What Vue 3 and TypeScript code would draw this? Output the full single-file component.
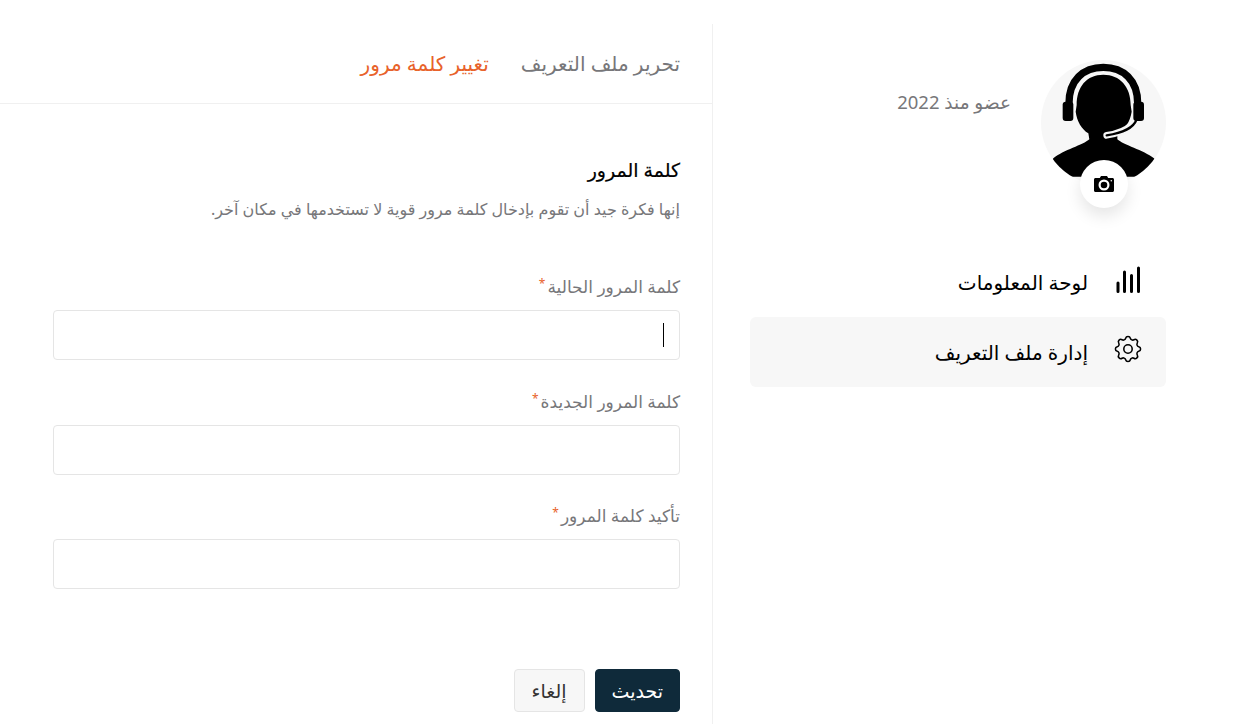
<script setup lang="ts">
const tabs = [
  { label: 'تحرير ملف التعريف', active: false },
  { label: 'تغيير كلمة مرور', active: true },
]
const fields = [
  { label: 'كلمة المرور الحالية', focused: true },
  { label: 'كلمة المرور الجديدة', focused: false },
  { label: 'تأكيد كلمة المرور', focused: false },
]
</script>

<template>
  <div class="page" dir="rtl">
    <aside class="sidebar">
      <div class="profile">
        <div class="avatar">
          <svg class="person" viewBox="63 30 375 375">
            <path d="M250 74C200 74 170 110 170 165L167 185C171 215 185 237 205 250L208 268C190 285 130 300 100 325L60 380H440L402 325C370 300 310 285 292 268L292 255C315 240 330 215 335 185L332 165C332 110 300 74 250 74Z" fill="#000" />
            <path d="M147 160C147 90 190 52 250 52C310 52 353 90 353 160" fill="none" stroke="#000" stroke-width="22" />
            <rect x="128" y="155" width="32" height="58" rx="9" fill="#000" />
            <rect x="340" y="155" width="32" height="58" rx="9" fill="#000" />
            <path d="M332 226C318 242 295 250 260 256" fill="none" stroke="#f7f7f7" stroke-width="20" stroke-linecap="round" />
            <path d="M350 208C340 235 310 248 260 256" fill="none" stroke="#000" stroke-width="7" stroke-linecap="round" />
          </svg>
          <button class="camera" type="button">
            <svg width="24" height="24" viewBox="0 0 24 24">
              <path fill="#000" fill-rule="evenodd" d="M9 4 7.800 6H3.500C2.700 6 2 6.700 2 7.500v11c0 .8.7 1.500 1.500 1.500h17c.8 0 1.500-.7 1.500-1.500v-11c0-.8-.7-1.500-1.500-1.500h-4.300L15 4H9zm3 14.500a5.500 5.500 0 1 1 0-11 5.500 5.500 0 0 1 0 11zm0-2.200a3.300 3.300 0 1 0 0-6.600 3.300 3.300 0 0 0 0 6.600z" />
              <circle cx="19.300" cy="8.700" r=".8" fill="#fff" />
            </svg>
          </button>
        </div>
        <span class="since">عضو منذ 2022</span>
      </div>

      <nav class="menu">
        <a class="menu-item">
          <svg class="menu-icon" viewBox="0 0 26 28" fill="none" stroke="#000" stroke-width="3" stroke-linecap="round">
            <path d="M3 25.500V17M9.500 25.500V6M16.500 25.500V9.500M23.500 25.500V2" />
          </svg>
          <span>لوحة المعلومات</span>
        </a>
        <a class="menu-item active">
          <svg class="menu-icon gear" viewBox="2 2 20 20" fill="none" stroke="#000" stroke-width="1.100">
            <path d="M10.325 4.317c.426-1.756 2.924-1.756 3.350 0a1.724 1.724 0 0 0 2.573 1.066c1.543-.94 3.310.826 2.370 2.370a1.724 1.724 0 0 0 1.065 2.572c1.756.426 1.756 2.924 0 3.350a1.724 1.724 0 0 0-1.066 2.573c.94 1.543-.826 3.310-2.370 2.370a1.724 1.724 0 0 0-2.572 1.065c-.426 1.756-2.924 1.756-3.350 0a1.724 1.724 0 0 0-2.573-1.066c-1.543.94-3.310-.826-2.370-2.370a1.724 1.724 0 0 0-1.065-2.572c-1.756-.426-1.756-2.924 0-3.350a1.724 1.724 0 0 0 1.066-2.573c-.94-1.543.826-3.310 2.370-2.370.996.608 2.296.07 2.572-1.065z" />
            <circle cx="12" cy="12" r="3" />
          </svg>
          <span>إدارة ملف التعريف</span>
        </a>
      </nav>
    </aside>

    <main class="content">
      <div class="tabs">
        <a v-for="tab in tabs" :key="tab.label" class="tab" :class="{ active: tab.active }">{{ tab.label }}</a>
      </div>

      <form class="form" @submit.prevent>
        <h2 class="title">كلمة المرور</h2>
        <p class="hint">إنها فكرة جيد أن تقوم بإدخال كلمة مرور قوية لا تستخدمها في مكان آخر.</p>

        <div v-for="field in fields" :key="field.label" class="field">
          <label class="label">{{ field.label }}<span class="req">*</span></label>
          <div class="input-wrap">
            <input class="input" type="password" />
            <span v-if="field.focused" class="caret"></span>
          </div>
        </div>

        <div class="actions">
          <button class="btn primary" type="submit">تحديث</button>
          <button class="btn" type="button">إلغاء</button>
        </div>
      </form>
    </main>
  </div>
</template>

<style>
html, body {
  margin: 0;
  overflow: hidden;
  background: #fff;
}
</style>

<style scoped>
.page {
  display: flex;
  height: 700px;
  padding-top: 24px;
  font-family: "Noto Sans", "DejaVu Sans", sans-serif;
  color: #000;
}

.sidebar {
  box-sizing: border-box;
  width: 529px;
  padding: 36px 75px 0 37px;
  border-left: 1px solid #f0f0f0;
}

.profile {
  display: flex;
  align-items: flex-start;
  gap: 30px;
}

.avatar {
  position: relative;
  width: 125px;
  height: 125px;
  border-radius: 50%;
  background: #f7f7f7;
}

.person {
  display: block;
  width: 125px;
  height: 125px;
  border-radius: 50%;
}

.camera {
  position: absolute;
  left: 39px;
  bottom: -23px;
  display: flex;
  align-items: center;
  justify-content: center;
  width: 48px;
  height: 48px;
  padding: 0;
  border: 0;
  border-radius: 50%;
  background: #fff;
  box-shadow: 0 8px 16px rgba(0, 0, 0, 0.1);
}

.since {
  margin-top: 30px;
  font-size: 18.5px;
  line-height: 24px;
  color: #77777a;
}

.menu {
  display: flex;
  flex-direction: column;
  margin-top: 63px;
}

.menu-item {
  display: flex;
  align-items: center;
  gap: 27px;
  height: 69px;
  padding: 0 25px;
  border-radius: 6px;
  font-size: 20px;
}

.menu-item.active {
  height: 70px;
  background: #f7f7f7;
}

.menu-icon {
  flex: none;
  width: 26px;
  height: 28px;
  margin-top: -6px;
}

.menu-icon.gear {
  width: 28px;
  height: 28px;
  margin: -6px -1px 0;
}

.content {
  flex: 1;
  min-width: 0;
}

.tabs {
  box-sizing: border-box;
  display: flex;
  align-items: center;
  gap: 32px;
  height: 80px;
  padding: 0 32px;
  border-bottom: 1px solid #f0f0f0;
}

.tab {
  font-size: 20px;
  color: #77777a;
}

.tab.active {
  color: #e8622a;
}

.form {
  padding: 51px 32px 0 53px;
}

.title {
  margin: 0;
  font-size: 19px;
  font-weight: 500;
  line-height: 30px;
  -webkit-text-stroke: 0.2px #000;
}

.hint {
  margin: 10px 0 48px;
  font-size: 16px;
  line-height: 28px;
  color: #77777a;
}

.field {
  margin-bottom: 25.5px;
}

.label {
  display: block;
  margin-bottom: 7px;
  font-size: 17px;
  line-height: 32px;
  color: #77777a;
}

.req {
  margin-right: 2px;
  color: #e8622a;
  font-size: 12px;
  line-height: 1;
  vertical-align: 5px;
}

.input-wrap {
  position: relative;
}

.input {
  display: block;
  box-sizing: border-box;
  width: 100%;
  height: 50px;
  border: 1px solid #e5e5e5;
  border-radius: 4px;
  background: #fff;
  outline: none;
}

.caret {
  position: absolute;
  top: 13px;
  right: 16px;
  width: 1px;
  height: 24px;
  background: #000;
}

.actions {
  display: flex;
  gap: 10px;
  margin-top: 80px;
}

.btn {
  box-sizing: border-box;
  min-width: 71px;
  height: 43px;
  padding: 0 16px;
  border: 1px solid #e5e5e5;
  border-radius: 4px;
  background: #f7f7f7;
  font-family: inherit;
  font-size: 19px;
  color: #333;
}

.btn.primary {
  border-color: #0f2a3a;
  background: #0f2a3a;
  color: #fff;
}
</style>
